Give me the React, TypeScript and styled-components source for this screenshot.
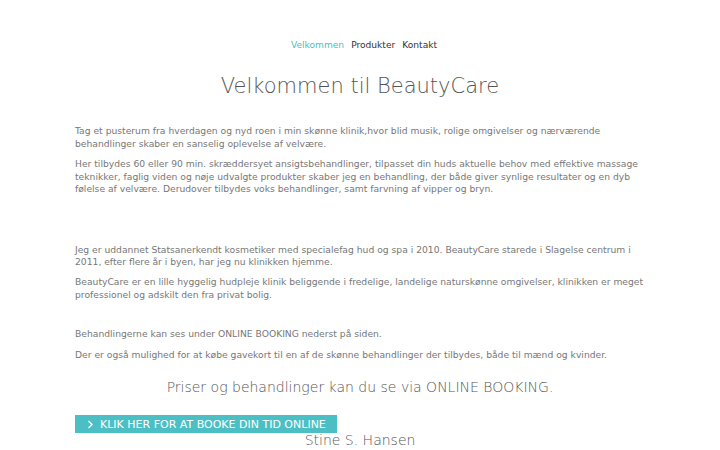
import React from "react";
import styled, { createGlobalStyle } from "styled-components";

const Global = createGlobalStyle`
  html, body { margin: 0; padding: 0; background: #fff; }
  body { font-family: "DejaVu Sans", "Liberation Sans", sans-serif; color: #777; }
  * { box-sizing: border-box; }
`;

const Page = styled.div`
  width: 720px;
  display: flex;
  flex-direction: column;
  align-items: center;
`;

const Nav = styled.nav`
  display: flex;
  gap: 7px;
  margin: 39px 0 0 8px;
  font-size: 9.1px;
  line-height: 12px;
`;

const NavLink = styled.a<{ $active?: boolean }>`
  color: ${(p) => (p.$active ? "#4bbfc4" : "#333")};
  text-decoration: none;
`;

const Title = styled.h1`
  margin: 20px 0 0;
  font-weight: 200;
  font-size: 21px;
  line-height: 30px;
  color: #555;
  text-align: center;
`;

const Content = styled.div`
  width: 570px;
  margin-top: 24px;
  display: flex;
  flex-direction: column;
`;

const P = styled.p<{ $gapTop?: number }>`
  margin: ${(p) => p.$gapTop ?? 0}px 0 0;
  font-size: 9.2px;
  line-height: 12.7px;
  color: #777;
`;

const Sub = styled.h3`
  margin: 16px 0 0;
  font-weight: 300;
  font-size: 14px;
  line-height: 20px;
  color: #555;
  text-align: center;
`;

const BookButton = styled.a`
  align-self: flex-start;
  display: flex;
  align-items: center;
  gap: 6px;
  margin-top: 18px;
  width: 262px;
  height: 18px;
  padding-left: 11px;
  background: #4bbfc4;
  color: #fff;
  font-size: 11px;
  text-decoration: none;
`;

const Signature = styled.div`
  margin-top: -2px;
  font-weight: 300;
  font-size: 14px;
  line-height: 18px;
  color: #555;
  text-align: center;
`;

export default function App() {
  return (
    <Page>
      <Global />
      <Nav>
        <NavLink $active>Velkommen</NavLink>
        <NavLink>Produkter</NavLink>
        <NavLink>Kontakt</NavLink>
      </Nav>
      <Title>Velkommen til BeautyCare</Title>
      <Content>
        <P>
          Tag et pusterum fra hverdagen og nyd roen i min skønne klinik,hvor blid musik, rolige omgivelser og nærværende behandlinger skaber en sanselig oplevelse af velvære.
        </P>
        <P $gapTop={7.5}>
          Her tilbydes 60 eller 90 min. skræddersyet ansigtsbehandlinger, tilpasset din huds aktuelle behov med effektive massage teknikker, faglig viden og nøje udvalgte produkter skaber jeg en behandling, der både giver synlige resultater og en dyb følelse af velvære. Derudover tilbydes voks behandlinger, samt farvning af vipper og bryn.
        </P>
        <P $gapTop={47.5}>
          Jeg er uddannet Statsanerkendt kosmetiker med specialefag hud og spa i 2010. BeautyCare starede i Slagelse centrum i 2011, efter flere år i byen, har jeg nu klinikken hjemme.
        </P>
        <P $gapTop={7.5}>
          BeautyCare er en lille hyggelig hudpleje klinik beliggende i fredelige, landelige naturskønne omgivelser, klinikken er meget professionel og adskilt den fra privat bolig.
        </P>
        <P $gapTop={26.5}>Behandlingerne kan ses under ONLINE BOOKING nederst på siden.</P>
        <P $gapTop={7.5}>
          Der er også mulighed for at købe gavekort til en af de skønne behandlinger der tilbydes, både til mænd og kvinder.
        </P>
        <Sub>Priser og behandlinger kan du se via ONLINE BOOKING.</Sub>
        <BookButton>
          <svg width="8" height="9" viewBox="0 0 8 9" fill="none">
            <path d="M2.5 1 L6 4.5 L2.5 8" stroke="#fff" strokeWidth="1.4" />
          </svg>
          KLIK HER FOR AT BOOKE DIN TID ONLINE
        </BookButton>
        <Signature>Stine S. Hansen</Signature>
      </Content>
    </Page>
  );
}
